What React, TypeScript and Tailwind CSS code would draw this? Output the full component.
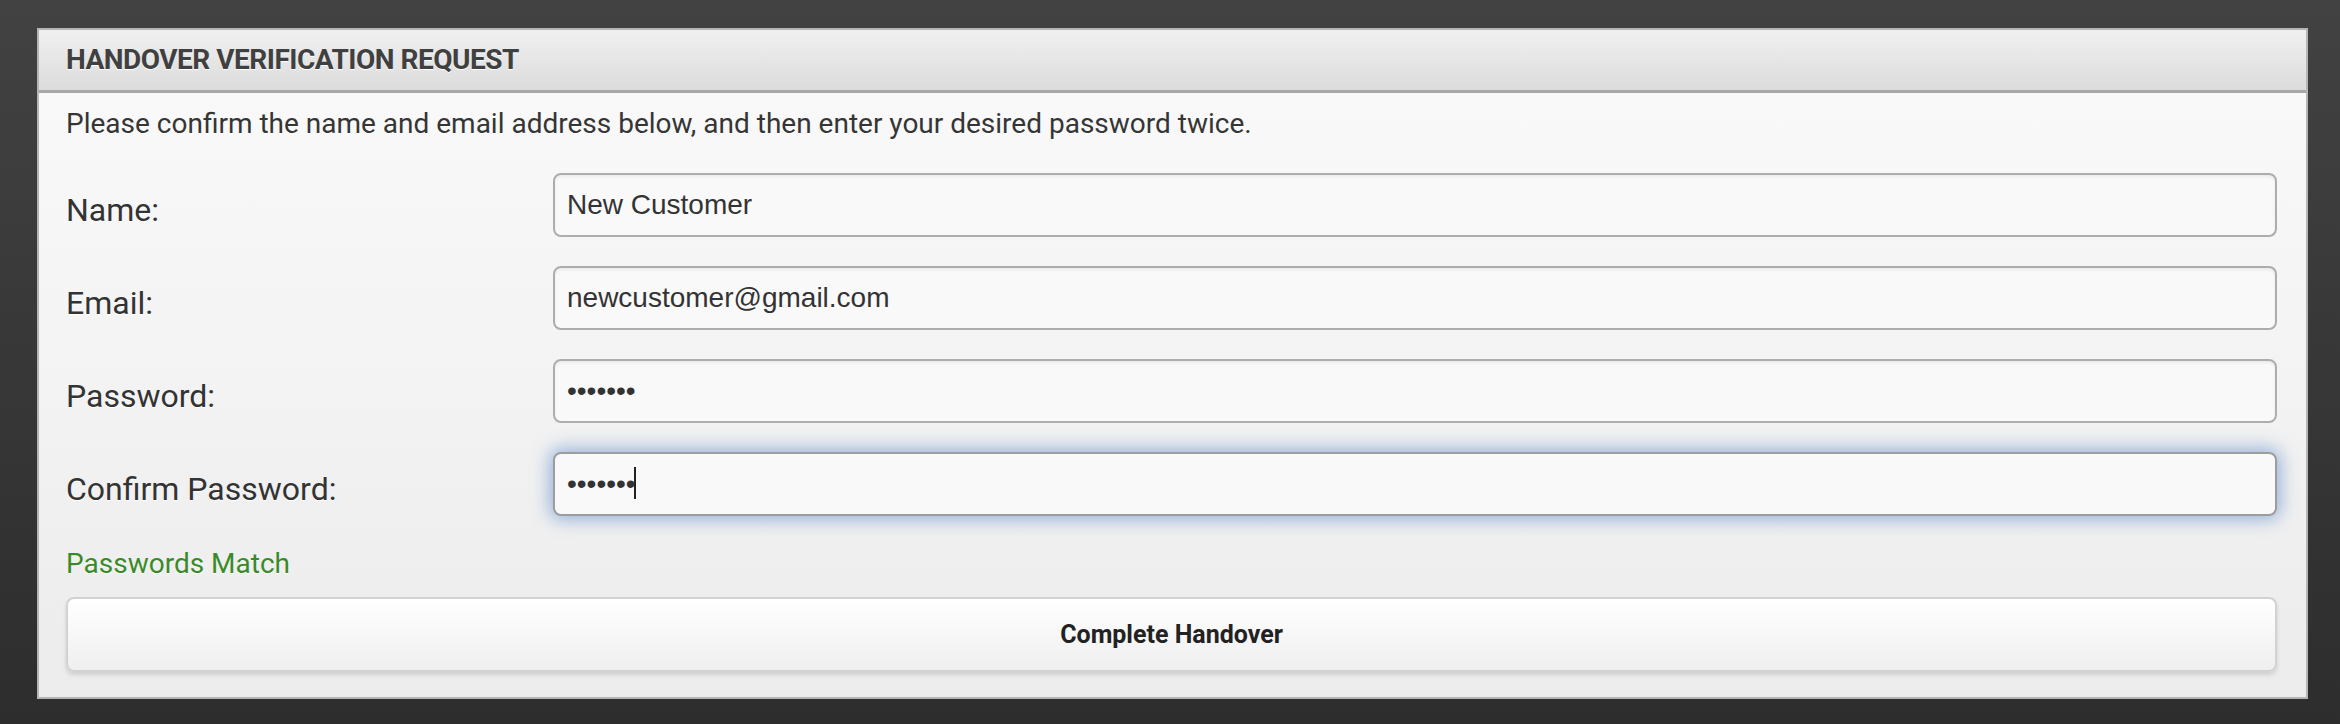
import React from 'react';

const fields = [
  { label: 'Name:', type: 'text', value: 'New Customer' },
  { label: 'Email:', type: 'email', value: 'newcustomer@gmail.com' },
  { label: 'Password:', type: 'password', value: 'secret1' },
  { label: 'Confirm Password:', type: 'password', value: 'secret1', focused: true },
];

export default function App() {
  return (
    <div className="h-[724px] w-full bg-gradient-to-b from-[#424242] to-[#2d2d2d] pt-[28px] pl-[37px] font-['Roboto',sans-serif]">
      <div className="flex h-[671px] w-[2271px] flex-col border-2 border-[#b5b5b5]">
        <div className="flex h-[63px] shrink-0 items-center border-b-[3px] border-[#a8a8a8] bg-gradient-to-b from-[#f0f0f0] to-[#dcdcdc] px-[27px]">
          <h2 className="text-[28px] font-bold uppercase tracking-[-0.5px] text-[#404040] [text-shadow:0_1px_0_#fff]">
            Handover Verification Request
          </h2>
        </div>

        <div className="flex flex-1 flex-col bg-gradient-to-b from-[#f9f9f9] to-[#ececec] pt-[11px] pr-[29px] pb-[25px] pl-[27px]">
          <p className="text-[28px] leading-[40px] text-[#353535] [text-shadow:0_1px_0_#fff]">
            Please confirm the name and email address below, and then enter your desired password twice.
          </p>

          <div className="mt-[29px] flex flex-col gap-[29px]">
            {fields.map((f) => (
              <div key={f.label} className="flex h-[64px] items-center">
                <label className="w-[487px] shrink-0 pt-[10px] text-[32px] text-[#333] [text-shadow:0_1px_0_#fff]">
                  {f.label}
                </label>
                <div className="relative h-full flex-1">
                  <input
                    type={f.type}
                    readOnly
                    defaultValue={f.value}
                    className={`h-full w-full rounded-[8px] border-2 bg-[#f9f9f9] px-[12px] font-['Liberation_Sans',Arial,sans-serif] text-[28px] text-[#333] outline-none ${
                      f.focused
                        ? 'border-[#9d9d9d] shadow-[0_0_18px_3px_rgba(84,132,200,0.6)]'
                        : 'border-[#adadad] shadow-[inset_0_2px_3px_rgba(0,0,0,0.06)]'
                    }`}
                  />
                  {f.focused && (
                    <span className="pointer-events-none absolute top-[15px] left-[81px] h-[32px] w-[2px] bg-[#222]" />
                  )}
                </div>
              </div>
            ))}
          </div>

          <div className="mt-[28px] text-[28px] leading-[40px] text-[#3b8a2a] [text-shadow:0_1px_0_#fff]">
            Passwords Match
          </div>

          <button className="mt-[13px] h-[75px] w-full rounded-[8px] border-2 border-[#d2d2d2] bg-gradient-to-b from-white to-[#efefef] text-[25px] font-bold text-[#222] shadow-[0_3px_4px_rgba(0,0,0,0.12)]">
            Complete Handover
          </button>
        </div>
      </div>
    </div>
  );
}
